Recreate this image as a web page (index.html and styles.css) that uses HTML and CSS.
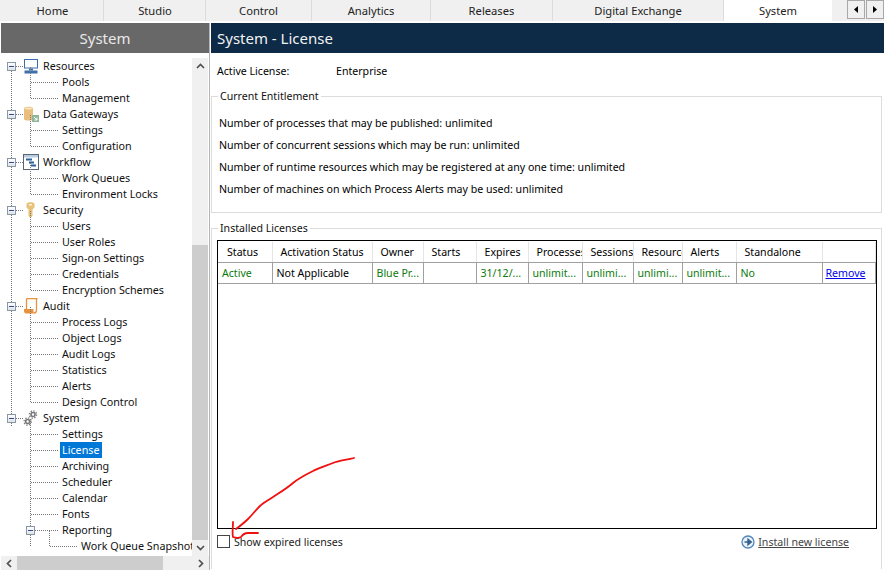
FILE: index.html
```html
<!DOCTYPE html>
<html lang="en">
<head>
<meta charset="utf-8">
<title>System - License</title>
<link rel="stylesheet" href="styles.css">
</head>
<body>
<nav class="tabs">
  <a class="tab t-home">Home</a>
  <a class="tab t-studio">Studio</a>
  <a class="tab t-control">Control</a>
  <a class="tab t-analytics">Analytics</a>
  <a class="tab t-releases">Releases</a>
  <a class="tab t-dx">Digital Exchange</a>
  <a class="tab t-system active">System</a>
  <div class="tab-gap"></div>
  <div class="tab-btns">
    <button class="tab-btn"><svg width="4" height="7" viewBox="0 0 4 7"><path d="M4 0V7L0 3.5Z" fill="#000"/></svg></button>
    <button class="tab-btn"><svg width="4" height="7" viewBox="0 0 4 7"><path d="M0 0V7L4 3.5Z" fill="#000"/></svg></button>
  </div>
</nav>
<div class="app">
  <aside class="side">
    <header class="side-head">System</header>
    <div class="side-body">
      <div class="tree">
        <div class="root-line"></div>
        <section class="group">
          <div class="row root"><i class="exp"></i><i class="hdash"></i>
            <svg class="ico" width="16" height="16" viewBox="0 0 16 16"><rect x="1.5" y="1.5" width="13" height="8.5" fill="#fff" stroke="#3d6fa8"/><rect x="6" y="10.5" width="4" height="2" fill="#3d6fa8"/><rect x="1.5" y="12.5" width="13" height="3" fill="#3d6fa8"/></svg>
            <span class="lbl">Resources</span></div>
          <div class="kids"><div class="row kid"><span class="lbl">Pools</span></div><div class="row kid"><span class="lbl">Management</span></div></div>
        </section>
        <section class="group">
          <div class="row root"><i class="exp"></i><i class="hdash"></i>
            <svg class="ico" width="16" height="16" viewBox="0 0 16 16"><path d="M1 2.5C1 0 10 0 10 2.5V13C10 15 1 15 1 13Z" fill="#e9bf7e"/><ellipse cx="5.5" cy="2.5" rx="3.5" ry="1" fill="#f8e6c4"/><rect x="9" y="9" width="7" height="7" fill="#8fb59a"/><path d="M11 11L14 14M14 11.5V14H11.5" stroke="#fff" fill="none"/></svg>
            <span class="lbl">Data Gateways</span></div>
          <div class="kids"><div class="row kid"><span class="lbl">Settings</span></div><div class="row kid"><span class="lbl">Configuration</span></div></div>
        </section>
        <section class="group">
          <div class="row root"><i class="exp"></i><i class="hdash"></i>
            <svg class="ico" width="16" height="16" viewBox="0 0 16 16"><rect x="0.5" y="0.5" width="15" height="15" fill="#fff" stroke="#5a6472"/><rect x="1" y="1" width="14" height="2.5" fill="#b9cde2"/><path d="M3 5.5H9M6 8.5H11M8 11.5H13" stroke="#2c5f95" stroke-width="2"/></svg>
            <span class="lbl">Workflow</span></div>
          <div class="kids"><div class="row kid"><span class="lbl">Work Queues</span></div><div class="row kid"><span class="lbl">Environment Locks</span></div></div>
        </section>
        <section class="group">
          <div class="row root"><i class="exp"></i><i class="hdash"></i>
            <svg class="ico" width="16" height="16" viewBox="0 0 16 16"><path d="M3.5 1.5C5 -0.3 10 -0.3 11.5 1.5V5.5L9.5 7.5V14L7.5 16L5.5 14V7.5L3.5 5.5Z" fill="#e8c27a"/><rect x="6" y="2" width="3" height="1.5" fill="#fff4d8"/></svg>
            <span class="lbl">Security</span></div>
          <div class="kids"><div class="row kid"><span class="lbl">Users</span></div><div class="row kid"><span class="lbl">User Roles</span></div><div class="row kid"><span class="lbl">Sign-on Settings</span></div><div class="row kid"><span class="lbl">Credentials</span></div><div class="row kid"><span class="lbl">Encryption Schemes</span></div></div>
        </section>
        <section class="group">
          <div class="row root"><i class="exp"></i><i class="hdash"></i>
            <svg class="ico" width="16" height="16" viewBox="0 0 16 16"><path d="M3.5 1.5C3.5 0.8 4 0.5 5 0.5H14.5M13.5 0.5V12C13.5 14 12.5 15 11 15" fill="none" stroke="#e8913f" stroke-width="1.3"/><path d="M3.5 1V11" stroke="#e8913f" stroke-width="1.3"/><path d="M1 11H10.5V13C10.5 14.5 11 15 11.5 15.5H3C1.8 15.5 1 14.5 1 13Z" fill="#e8913f"/></svg>
            <span class="lbl">Audit</span></div>
          <div class="kids"><div class="row kid"><span class="lbl">Process Logs</span></div><div class="row kid"><span class="lbl">Object Logs</span></div><div class="row kid"><span class="lbl">Audit Logs</span></div><div class="row kid"><span class="lbl">Statistics</span></div><div class="row kid"><span class="lbl">Alerts</span></div><div class="row kid"><span class="lbl">Design Control</span></div></div>
        </section>
        <section class="group">
          <div class="row root"><i class="exp"></i><i class="hdash"></i>
            <svg class="ico" width="16" height="16" viewBox="0 0 16 16"><circle cx="10" cy="4.5" r="2" fill="#fff" stroke="#777" stroke-width="1.6"/><circle cx="10" cy="4.5" r="3.6" fill="none" stroke="#777" stroke-width="1.3" stroke-dasharray="1.4 1.4"/><circle cx="4.7" cy="11.5" r="2" fill="#fff" stroke="#777" stroke-width="1.6"/><circle cx="4.7" cy="11.5" r="3.6" fill="none" stroke="#777" stroke-width="1.3" stroke-dasharray="1.4 1.4"/></svg>
            <span class="lbl">System</span></div>
          <div class="kids"><div class="row kid"><span class="lbl">Settings</span></div><div class="row kid"><span class="lbl sel">License</span></div><div class="row kid"><span class="lbl">Archiving</span></div><div class="row kid"><span class="lbl">Scheduler</span></div><div class="row kid"><span class="lbl">Calendar</span></div><div class="row kid"><span class="lbl">Fonts</span></div>
            <div class="row kid2"><i class="exp"></i><i class="hdash2"></i><span class="lbl">Reporting</span></div>
            <div class="kids2"><div class="row kid"><span class="lbl">Work Queue Snapshot</span></div></div>
          </div>
        </section>
      </div>
      <div class="vbar">
        <div class="sb-btn"><svg width="9" height="6" viewBox="0 0 9 6"><path d="M1 5L4.5 1.5L8 5" fill="none" stroke="#505050" stroke-width="1.7"/></svg></div>
        <div class="vtrack"><div class="vthumb"></div></div>
        <div class="sb-btn"><svg width="9" height="6" viewBox="0 0 9 6"><path d="M1 1L4.5 4.5L8 1" fill="none" stroke="#505050" stroke-width="1.7"/></svg></div>
      </div>
    </div>
    <div class="hbar">
      <div class="hb-btn"><svg width="6" height="9" viewBox="0 0 6 9"><path d="M5 1L1.5 4.5L5 8" fill="none" stroke="#505050" stroke-width="1.7"/></svg></div>
      <div class="hthumb"></div>
      <div class="htrack"></div>
      <div class="hb-btn"><svg width="6" height="9" viewBox="0 0 6 9"><path d="M1 1L4.5 4.5L1 8" fill="none" stroke="#505050" stroke-width="1.7"/></svg></div>
    </div>
  </aside>
  <main class="main">
    <header class="main-head">System - License</header>
    <div class="main-body">
      <div class="active-line"><span class="active-key">Active License:</span><span>Enterprise</span></div>
      <fieldset class="box ent">
        <legend>Current Entitlement</legend>
        <p>Number of processes that may be published: unlimited</p>
        <p>Number of concurrent sessions which may be run: unlimited</p>
        <p>Number of runtime resources which may be registered at any one time: unlimited</p>
        <p>Number of machines on which Process Alerts may be used: unlimited</p>
      </fieldset>
      <fieldset class="box inst">
        <legend>Installed Licenses</legend>
        <div class="grid">
          <table>
            <thead><tr>
              <th class="c1">Status</th><th class="c2">Activation Status</th><th class="c3">Owner</th><th class="c4">Starts</th><th class="c5">Expires</th><th class="c6">Processes</th><th class="c7">Sessions</th><th class="c8">Resources</th><th class="c9">Alerts</th><th class="c10">Standalone</th><th class="c11"></th>
            </tr></thead>
            <tbody><tr>
              <td class="g">Active</td><td>Not Applicable</td><td class="g">Blue Pr...</td><td></td><td class="g">31/12/...</td><td class="g">unlimit...</td><td class="g">unlimi...</td><td class="g">unlimi...</td><td class="g">unlimit...</td><td class="g">No</td><td class="rm"><a>Remove</a></td>
            </tr></tbody>
          </table>
        </div>
        <div class="foot">
          <label class="chk"><i class="box-ico"></i>Show expired licenses</label>
          <a class="install"><svg width="14" height="14" viewBox="0 0 14 14"><circle cx="7" cy="7" r="6" fill="#eaf1f8" stroke="#4f86bb" stroke-width="1.3"/><path d="M3.5 7H8M7 4.2L10.3 7L7 9.8Z" stroke="#33628f" stroke-width="1.4" fill="#33628f"/></svg><span>Install new license</span></a>
        </div>
      </fieldset>
    </div>
  </main>
</div>
<svg class="scribble" width="130" height="90" viewBox="230 455 130 90"><path d="M354 458C346 460 338 461 333 463C325 466 318 468 313 471C305 475 299 478 293 483C286 489 279 493 273 497C267 501 263 503 260 506C255 511 252 515 248 519C244 523 240 526 236 529M233 522C233 528 232 533 233 537C236 538 239 538 241 537C243 534 245 533 248 533L258 533" fill="none" stroke="#f01010" stroke-width="1.8" stroke-linecap="round" stroke-linejoin="round"/></svg>
</body>
</html>
```
FILE: styles.css
```css
* { box-sizing: border-box; }
html, body { margin: 0; height: 100%; overflow: hidden; background: #fff; }
body { width: 884px; height: 570px; font-family: "Noto Sans", "Open Sans", sans-serif; font-size: 10.6px; color: #000; position: relative; }

.tabs { display: flex; height: 21px; background: #f0f0f0; }
.tab { display: flex; align-items: center; justify-content: center; font-size: 11.2px; color: #222; border-right: 1px solid #dcdcdc; padding-bottom: 1px; }
.t-home { width: 104px; padding-left: 2px; }
.t-studio { width: 102px; padding-left: 1px; }
.t-control { width: 106px; }
.t-analytics { width: 119px; }
.t-releases { width: 122px; }
.t-dx { width: 171px; }
.t-system { width: 108px; }
.tab.active { background: #fff; border-right: 0; }
.tab-gap { flex: 1; }
.tab-btns { display: flex; height: 19px; gap: 1px; }
.tab-btn { width: 18px; height: 19px; padding: 0; display: flex; align-items: center; justify-content: center; background: #f0f0f0; border: 1px solid #a8a8a8; }

.app { display: flex; height: 549px; padding-top: 2px; }
.side { width: 208px; margin-left: 1px; display: flex; flex-direction: column; flex: none; }
.side-head { height: 30px; background: #686868; color: #e8e8e8; font-size: 15px; display: flex; align-items: center; justify-content: center; }
.side-body { flex: 1; display: flex; min-height: 0; padding-top: 5px; }

.tree { position: relative; width: 191px; overflow: hidden; flex: none; font-size: 10.75px; }
.root-line { position: absolute; left: 10px; top: 8px; height: 360px; border-left: 1px dotted #777; }
.row { height: 16px; display: flex; align-items: center; white-space: nowrap; position: relative; }
.root { padding-left: 6px; }
.exp { width: 9px; height: 9px; flex: none; border: 1px solid #8a97a6; background: linear-gradient(#fff, #dfe3e8); position: relative; z-index: 1; }
.exp::after { content: ""; position: absolute; left: 1px; right: 1px; top: 3px; height: 1px; background: #2f4f86; }
.hdash { width: 7px; flex: none; border-top: 1px dotted #777; }
.ico { flex: none; margin-top: -1px; }
.root .lbl { margin-left: 2px; }
.lbl { padding: 0 2px; line-height: 16px; color: #111; }
.kids { position: relative; }
.kids::before { content: ""; position: absolute; left: 29px; top: -7px; bottom: 8px; border-left: 1px dotted #777; }
.kid { padding-left: 30px; }
.kid::before { content: ""; width: 27px; flex: none; margin-right: 2px; border-top: 1px dotted #777; }
.kid2 { padding-left: 25px; }
.hdash2 { width: 23px; flex: none; border-top: 1px dotted #777; margin-right: 2px; }
.kids2 { position: relative; padding-left: 19px; }
.kids2::before { content: ""; position: absolute; left: 48px; top: -7px; height: 15px; border-left: 1px dotted #777; }
.sel { background: #0078d7; color: #fff; }

.vbar { width: 16px; flex: none; display: flex; flex-direction: column; background: #f0f0f0; }
.sb-btn { height: 16px; display: flex; align-items: center; justify-content: center; flex: none; }
.vtrack { flex: 1; padding-top: 171px; }
.vthumb { height: 100%; background: #cdcdcd; }
.hbar { height: 14px; flex: none; display: flex; background: #f0f0f0; align-items: stretch; }
.hb-btn { width: 16px; flex: none; display: flex; align-items: center; justify-content: center; }
.hthumb { width: 146px; background: #cdcdcd; }
.htrack { flex: 1; }

.main { flex: 1; min-width: 0; border-left: 1px solid #b4b4b4; }
.main-head { height: 30px; margin-left: 1px; background: #0d2a47; color: #f2f2f2; font-size: 15px; display: flex; align-items: center; padding-left: 6px; }
.main-body { padding: 10px 2px 0 1px; }
.active-line { display: flex; height: 16px; align-items: center; padding-left: 6px; }
.active-key { width: 119px; }
.box { margin: 0; padding: 0 7px; border: 1px solid #dcdcdc; min-width: 0; }
.box legend { padding: 0 2px; margin-left: -1px; line-height: 14px; color: #111; }
.ent { margin-top: 10px; height: 124px; }
.ent p { margin: 0; height: 22px; line-height: 22px; position: relative; top: 9px; }
.inst { margin-top: 8px; height: 348px; border-bottom: 0; }
.grid { margin: 5px 0 0 -2px; width: 660px; height: 289px; border: 1px solid #000; padding: 1px 0 0 0; }
table { border-collapse: collapse; table-layout: fixed; width: 657px; }
th, td { padding: 0 2px; font-weight: 400; overflow: hidden; white-space: nowrap; border-right: 1px solid #a0a0a0; }
th { height: 20px; border-right-color: #e4e4e4; border-bottom: 1px solid #a0a0a0; text-align: left; padding: 0 0 0 8px; }
th.c1 { padding-left: 9px; }
td { height: 21px; border-bottom: 1px solid #a0a0a0; padding-left: 4px; }
.c1 { width: 54px; } .c2 { width: 100px; } .c3 { width: 51px; } .c4 { width: 53px; } .c5 { width: 52px; }
.c6 { width: 54px; } .c7 { width: 51px; } .c8 { width: 49px; } .c9 { width: 54px; } .c10 { width: 86px; } .c11 { width: 53px; }
.g { color: #0a7a0a; }
.rm { padding-left: 3px; }
.rm a { color: #0000ee; text-decoration: underline; }
.foot { display: flex; justify-content: space-between; padding-top: 6px; margin-left: -2px; padding-right: 25px; }
.chk { display: flex; align-items: center; height: 13px; color: #222; }
.box-ico { width: 13px; height: 13px; border: 1px solid #444; margin-right: 4px; background: #fff; }
.install { display: flex; align-items: center; gap: 3px; height: 14px; color: #444; }
.install span { text-decoration: underline; }
.scribble { position: absolute; left: 230px; top: 455px; pointer-events: none; }
```
